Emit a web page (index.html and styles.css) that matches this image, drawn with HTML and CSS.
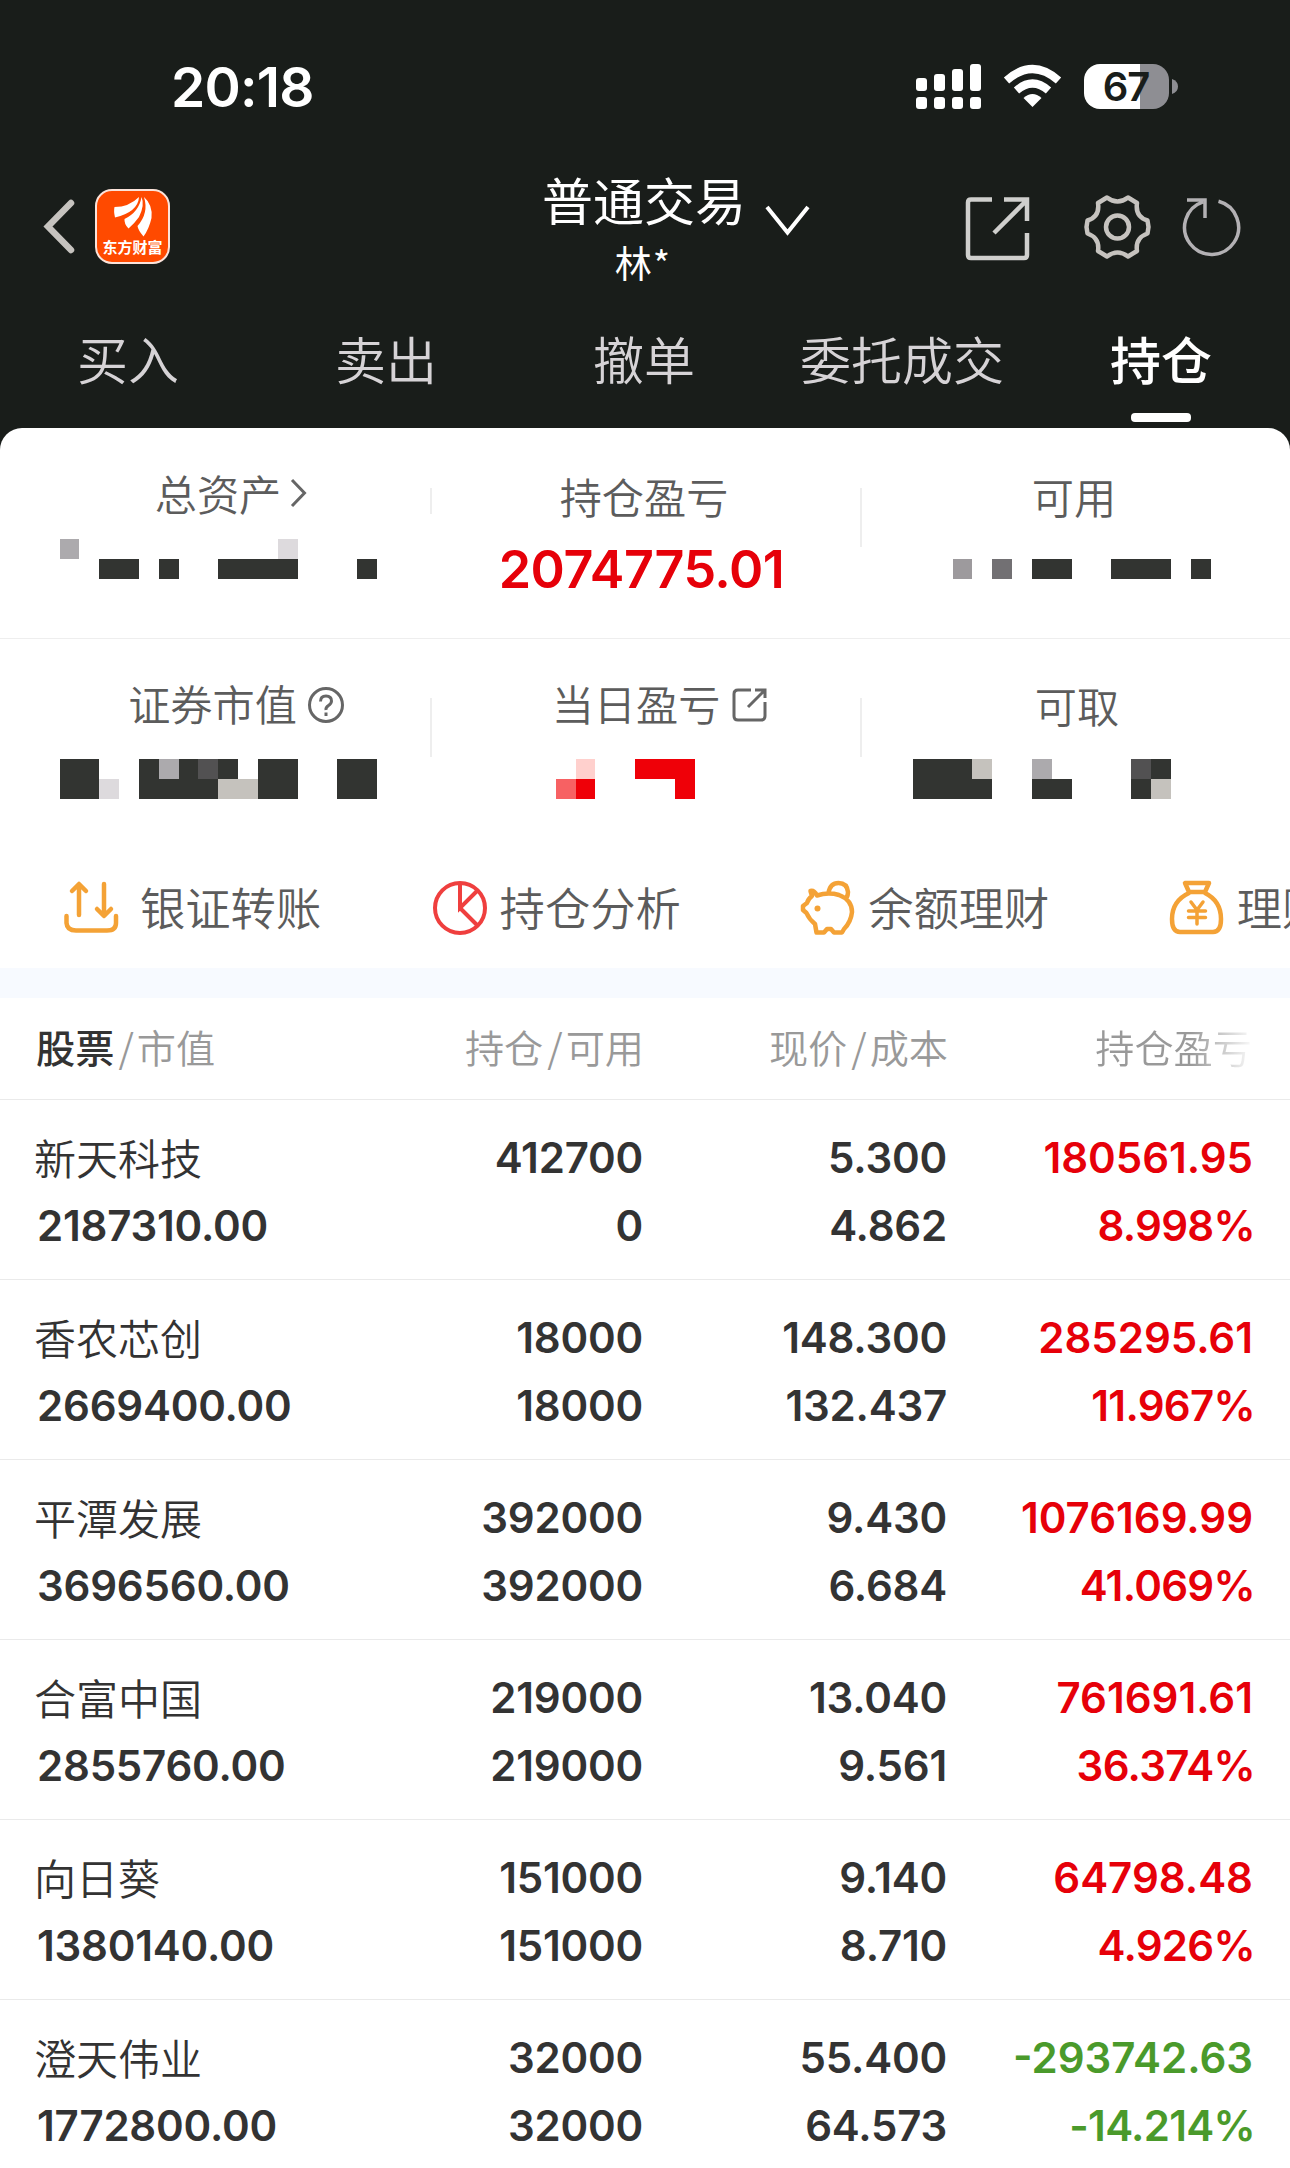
FILE: index.html
```html
<!DOCTYPE html>
<html lang="zh-CN">
<head>
<meta charset="utf-8">
<title>持仓</title>
<link rel="stylesheet" href="styles.css">
</head>
<body>
<header class="top">
  <div class="status">
    <span class="time">20:18</span>
    <svg class="status-icons" width="264" height="48" viewBox="915 63 264 48">
      <g fill="#fff">
        <rect x="916" y="78" width="11" height="13" rx="3"/><rect x="934" y="74" width="11" height="17" rx="3"/><rect x="952" y="69" width="11" height="22" rx="3"/><rect x="970" y="64" width="11" height="27" rx="3"/>
        <rect x="916" y="97" width="11" height="12" rx="3"/><rect x="934" y="97" width="11" height="12" rx="3"/><rect x="952" y="97" width="11" height="12" rx="3"/><rect x="970" y="97" width="11" height="12" rx="3"/>
        <path d="M1032.500 107 L1023.500 98 Q1032.500 90 1041.500 98Z"/>
      </g>
      <g fill="none" stroke="#fff" stroke-width="8">
        <path d="M1006.500 80.500 Q1032.500 57.500 1058.500 80.500"/>
        <path d="M1016.500 90.500 Q1032.500 76.500 1048.500 90.500"/>
      </g>
      <path fill="#8e8e93" d="M1140 64h13a16 16 0 0 1 16 16v13a16 16 0 0 1-16 16h-13z"/>
      <path fill="#fff" d="M1140 64h-40a16 16 0 0 0-16 16v13a16 16 0 0 0 16 16h40z"/>
      <path fill="#8e8e93" d="M1172 79q6 2 6 7.500t-6 7.500z"/>
      <text class="battery-text" x="1126" y="101" text-anchor="middle">67</text>
    </svg>
  </div>
  <div class="nav">
    <svg class="back" width="34" height="58" viewBox="42 198 34 58"><path d="M71 203L48 226.500L71 250" fill="none" stroke="#c6c3bf" stroke-width="6.500" stroke-linecap="round"/></svg>
    <div class="logo">
      <svg width="40" height="42" viewBox="110 195 40 42" fill="#fff"><path d="M111.500 206Q126 206 136 196Q135 211 112 216.500Q110.500 210 111.500 206Z"/><path d="M138.500 196Q142 204 136 216Q131 223 125.500 227.500Q121 223 121.500 218Q136 211 138.500 196Z"/><path d="M141 196Q150 204 148.500 217Q146 228 140.500 235.500Q135 229 134.500 225Q146 212 141 196Z"/></svg>
      <span>东方财富</span>
    </div>
    <div class="account">
      <div class="account-name">普通交易</div>
      <div class="account-user">林*</div>
    </div>
    <svg class="drop" width="48" height="34" viewBox="763 203 48 34"><path d="M766 207L786.500 232.500L807 207" fill="none" stroke="#fff" stroke-width="4"/></svg>
    <svg class="tools" width="280" height="70" viewBox="964 192 280 70" fill="none">
      <g stroke="#cfcfcd" stroke-width="4.500"><path d="M992 199.500H971Q968 199.500 968 202.500V255Q968 258 971 258H1024Q1027 258 1027 255V233M1004 199.500H1027V221M1026 201L994 233"/></g>
      <g stroke="#c6c3bf" stroke-width="4.500"><path d="M1107 197.500Q1117.500 205.500 1128 197.500L1137 203Q1135 216.500 1147.500 220.500L1148.500 227L1147.500 233.500Q1135 238 1137 251L1128 256.500Q1117.500 248.500 1107 256.500L1098 251Q1100 238 1087.500 233.500L1086.500 227L1087.500 220.500Q1100 216.500 1098 203Z" stroke-linejoin="round"/><circle cx="1117.500" cy="227" r="11.500"/></g>
      <g stroke="#b3b1b4" stroke-width="3.500"><path d="M1218.500 201.300A27 27 0 1 1 1203 201.800M1187 200H1205V218"/></g>
    </svg>
  </div>
  <nav class="tabs">
    <span>买入</span><span>卖出</span><span>撤单</span><span>委托成交</span><span class="active">持仓</span>
  </nav>
</header>
<main class="panel">
  <section class="summary">
    <div class="cell">
      <div class="label raised arrow">总资产<svg width="18" height="30" viewBox="0 0 18 30"><path d="M2 2L14.500 15L2 28" fill="none" stroke="#666" stroke-width="3"/></svg></div>
      <svg class="mosaic" width="317" height="40" viewBox="60 0 317 40" fill="#323431"><path fill="#acaaad" d="M60 0h19v20h-19z"/><path fill="#dddadd" d="M278 0h20v20h-20z"/><path d="M99 20h40v20H99zM159 20h20v20h-20zM218 20h80v20h-80zM357 20h20v20h-20z"/></svg>
    </div>
    <div class="cell short-line">
      <div class="label">持仓盈亏</div>
      <div class="total">2074775.01</div>
    </div>
    <div class="cell line">
      <div class="label">可用</div>
      <svg class="mosaic available" width="258" height="40" viewBox="953 0 258 40" fill="#323431"><path fill="#9d9a9d" d="M953 20h19v20h-19z"/><path fill="#727073" d="M992 20h20v20h-20z"/><path d="M1032 20h40v20h-40zM1111 20h60v20h-60zM1191 20h20v20h-20z"/></svg>
    </div>
  </section>
  <section class="summary second">
    <div class="cell">
      <div class="label raised help">证券市值<svg width="38" height="38" viewBox="0 0 38 38" fill="none" stroke="#666" stroke-width="3"><circle cx="19" cy="19" r="16.500"/><path d="M13.500 15.500Q13.500 10 19 10T24.500 15Q24.500 17.500 21.500 19.500T19 24"/><path d="M19 26.500v3.500"/></svg></div>
      <svg class="mosaic" width="317" height="40" viewBox="60 0 317 40" fill="#323431"><path d="M60 0h39v40H60zM139 0h99v20h20V0h-20v20h-20v20h-79zM258 0h40v40h-40zM337 0h40v40h-40z"/><path d="M218 0h20v20h-20z"/><path fill="#acaaad" d="M159 0h20v20h-20z"/><path fill="#525152" d="M198 0h20v20h-20z"/><path fill="#dddadd" d="M99 20h20v20H99z"/><path fill="#c5c2bd" d="M218 20h40v20h-40z"/><path fill="#fff" d="M238 0h20v20h-20z"/></svg>
    </div>
    <div class="cell line">
      <div class="label raised share">当日盈亏<svg width="36" height="34" viewBox="0 0 36 34" fill="none" stroke="#666" stroke-width="3"><path d="M19 2H6Q2 2 2 6V28Q2 32 6 32H29Q33 32 33 28V14M23 2H33V10M33 2L16 19"/></svg></div>
      <svg class="mosaic daily" width="139" height="40" viewBox="556 0 139 40" fill="#ef0008"><path fill="#ffd0cd" d="M576 0h19v20h-19z"/><path fill="#f76163" d="M556 20h20v20h-20z"/><path d="M576 20h19v20h-19zM635 0h60v40h-20V20h-40z"/></svg>
    </div>
    <div class="cell line">
      <div class="label cash">可取</div>
      <svg class="mosaic withdraw" width="258" height="40" viewBox="913 0 258 40" fill="#323431"><path d="M913 0h59v20h20v20h-79zM1032 20h40v20h-40zM1151 0h20v20h-20zM1131 20h20v20h-20z"/><path fill="#c5c2bd" d="M972 0h20v20h-20zM1151 20h20v20h-20z"/><path fill="#acaaad" d="M1032 0h20v20h-20z"/><path fill="#525152" d="M1131 0h20v20h-20z"/></svg>
    </div>
  </section>
  <section class="quick">
    <div class="q transfer"><svg width="56" height="56" viewBox="63 880 56 56" fill="none" stroke="#f4a236" stroke-width="4.500" stroke-linecap="round" stroke-linejoin="round"><path d="M79 915V885M72 891L79 884L86 891M104 884V915M97 909L104 916L111 909M66.500 916V923Q67 930.500 76 930.500H107Q116 930.500 116 923V916"/></svg><span>银证转账</span></div>
    <div class="q"><svg width="56" height="56" viewBox="432 880 56 56" fill="none" stroke="#ef3f3e" stroke-width="4"><circle cx="460" cy="908" r="25"/><path d="M460 883V908L478 890M460 908L478 926"/></svg><span>持仓分析</span></div>
    <div class="q"><svg width="56" height="56" viewBox="801 880 56 56" fill="none" stroke="#f4a236" stroke-width="4.500" stroke-linejoin="round"><path d="M829.500 893Q831 883 839.500 883T849 892Q849 895 847.500 898M818 895.500Q829 892 840 895Q853 900 853 912Q852 922 845 929L843 932.500H835L832 929H828L825 932.500H817.500L816 924Q810 919 807.500 913L804 910V906L808 903Q809 899 813 896L811.500 891Q815 890 818 895.500Z"/><circle cx="818.500" cy="908.500" r="3" fill="#f4a236" stroke="none"/></svg><span>余额理财</span></div>
    <div class="q"><svg width="56" height="56" viewBox="1169 880 56 56" fill="none" stroke="#f4a236" stroke-width="4.500" stroke-linejoin="round" stroke-linecap="round"><path d="M1189 892L1185 883H1209L1205 892ZM1189 893Q1172 901 1172 919Q1172 932 1180 932H1213Q1221 932 1221 919Q1221 901 1205 893"/><path stroke-width="3.500" d="M1191 902L1197 910L1203 902M1197 910V924M1188.500 911H1205.500M1188.500 917.500H1205.500"/></svg><span>理财</span></div>
  </section>
  <section class="table">
    <div class="row head"><div><b>股票</b><i>/</i>市值</div><div>持仓<i>/</i>可用</div><div>现价<i>/</i>成本</div><div class="fade">持仓盈亏</div></div>
    <div class="row"><div class="name">新天科技</div><div>412700</div><div>5.300</div><div class="up">180561.95</div><div>2187310.00</div><div>0</div><div>4.862</div><div class="up pct">8.998%</div></div>
    <div class="row"><div class="name">香农芯创</div><div>18000</div><div>148.300</div><div class="up">285295.61</div><div>2669400.00</div><div>18000</div><div>132.437</div><div class="up pct">11.967%</div></div>
    <div class="row"><div class="name">平潭发展</div><div>392000</div><div>9.430</div><div class="up">1076169.99</div><div>3696560.00</div><div>392000</div><div>6.684</div><div class="up pct">41.069%</div></div>
    <div class="row"><div class="name">合富中国</div><div>219000</div><div>13.040</div><div class="up">761691.61</div><div>2855760.00</div><div>219000</div><div>9.561</div><div class="up pct">36.374%</div></div>
    <div class="row"><div class="name">向日葵</div><div>151000</div><div>9.140</div><div class="up">64798.48</div><div>1380140.00</div><div>151000</div><div>8.710</div><div class="up pct">4.926%</div></div>
    <div class="row"><div class="name">澄天伟业</div><div>32000</div><div>55.400</div><div class="down">-293742.63</div><div>1772800.00</div><div>32000</div><div>64.573</div><div class="down pct">-14.214%</div></div>
  </section>
</main>
</body>
</html>
```

FILE: styles.css
```css
* { box-sizing: border-box; }
html { overflow: hidden; }
body {
  margin: 0;
  width: 1290px;
  height: 2168px;
  overflow: hidden;
  background: #191d1a;
  color: #333;
  font-family: Inter, "Noto Sans CJK SC", sans-serif;
}
svg { display: block; flex: none; }

/* Header */
.top { height: 428px; color: #fff; }
.status { height: 170px; padding: 62px 111px 0 171px; display: flex; justify-content: space-between; align-items: flex-start; }
.status-icons { margin-top: 1px; }
.time { font-size: 55px; line-height: 50px; font-weight: 600; letter-spacing: -0.8px; }
.battery-text { font: 600 40px Inter, sans-serif; fill: #191d1a; letter-spacing: -1px; }
.nav { height: 130px; display: flex; align-items: flex-start; }
.back { margin: 28px 0 0 42px; }
.logo {
  width: 75px; height: 75px; margin: 19px 0 0 19px; padding-top: 5px;
  border: 2px solid #fbe3da; border-radius: 17px; background: #ff4a00;
  display: flex; flex-direction: column; align-items: center;
}
.logo span { font: 700 15px/16px "Noto Sans CJK SC", sans-serif; margin-top: 1px; white-space: nowrap; }
.account { width: 206px; margin-left: 371px; text-align: center; font-family: "Noto Sans CJK SC", sans-serif; }
.account-name { font-size: 51px; line-height: 58px; font-weight: 400; white-space: nowrap; }
.account-user { font-size: 37px; line-height: 68px; letter-spacing: 1px; padding-right: 2px; }
.drop { margin: 33px 0 0 17px; }
.tools { margin: 22px 0 0 152px; }
.tabs {
  height: 128px; display: grid; grid-template-columns: repeat(5, 1fr);
  font: 350 51px/116px "Noto Sans CJK SC", sans-serif; color: #d6d3d6; text-align: center;
}
.tabs span { padding-right: 2px; }
.tabs .active { color: #fff; font-weight: 500; display: flex; flex-direction: column; align-items: center; padding-right: 0; }
.tabs .active::after { content: ""; width: 60px; height: 9px; border-radius: 4px; background: #fff; margin-top: -3px; }

/* Account summary */
.panel { height: 1740px; background: #fff; border-radius: 22px 22px 0 0; overflow: hidden; }
.summary { height: 211px; display: grid; grid-template-columns: repeat(3, 430px); border-bottom: 1px solid #eee; }
.summary.second { height: 211px; border: 0; }
.cell { display: flex; flex-direction: column; align-items: center; padding-top: 38px; background: no-repeat 0 60px / 2px 59px; }
.line { background-image: linear-gradient(#eee, #eee); }
.short-line { background-image: linear-gradient(#eee, #eee); background-size: 2px 26px; }
.label { height: 60px; margin-bottom: 13px; padding-right: 2px; font: 350 42.200px/60px "Noto Sans CJK SC", sans-serif; color: #5c5c5c; display: flex; align-items: center; }
.raised { margin-top: -3px; margin-bottom: 16px; }
.arrow { padding-left: 35px; }
.arrow svg { margin-left: 9px; }
.help { padding-left: 45px; }
.help svg { margin: 3px 0 0 10px; }
.share { padding-left: 32px; }
.share svg { margin: 3px 0 0 12px; }
.cash { padding: 0 0 0 4px; }
.mosaic { margin-left: 7px; shape-rendering: crispEdges; }
.available { margin-left: 13px; }
.daily { margin-left: -39px; }
.withdraw { margin-left: -67px; }
.total { margin-left: -7px; padding-top: 1px; font-size: 52px; line-height: 60px; font-weight: 600; color: #e60009; letter-spacing: -0.5px; }
.second .cell { padding-top: 36px; background-position-y: 59px; }
.second .label { margin-bottom: 24px; }
.second .raised { margin-top: -2px; margin-bottom: 26px; }

/* Shortcuts */
.quick { height: 118px; display: grid; grid-template-columns: repeat(4, 368.6px); padding-left: 63px; overflow: hidden; }
.q { height: 60px; margin-top: 28px; display: flex; align-items: center; gap: 12px; font: 350 45.300px/60px "Noto Sans CJK SC", sans-serif; color: #5c5c5c; white-space: nowrap; }
.q span { padding-bottom: 5px; }
.transfer { gap: 21px; }

/* Positions */
.table { border-top: 30px solid #f7faff; }
.row {
  height: 180px; padding: 25px 38px 0 37px; border-bottom: 1px solid #eaeaea;
  display: grid; grid-template-columns: 301px 305px 304px 305px; grid-auto-rows: 68px;
  font-size: 42px; font-weight: 560; line-height: 66px; letter-spacing: -0.200px; text-align: right;
}
.row > :nth-child(4n + 1) { text-align: left; }
.row .name { font: 350 42px/64px "Noto Sans CJK SC", sans-serif; letter-spacing: 0; margin-left: -3px; }
.row .up, .row .down { letter-spacing: 0; margin-right: -1px; }
.row .pct { letter-spacing: -0.700px; margin-right: -3px; }
.row.head { height: 102px; padding-top: 15px; font: 350 39.200px/66px "Noto Sans CJK SC", sans-serif; letter-spacing: 0; color: #999; }
.head > :first-child { margin-left: -1px; }
.head > :nth-child(2), .head > :nth-child(3) { margin-right: -1px; }
.head b { font-weight: 500; color: #333; }
.head i { font-style: normal; margin: 0 3px 0 4px; }
.head .fade { color: transparent; background: linear-gradient(90deg, #999 80%, #fff 101%); background-clip: text; -webkit-background-clip: text; }
.up { color: #e60009; }
.down { color: #4a9a2b; }
```
